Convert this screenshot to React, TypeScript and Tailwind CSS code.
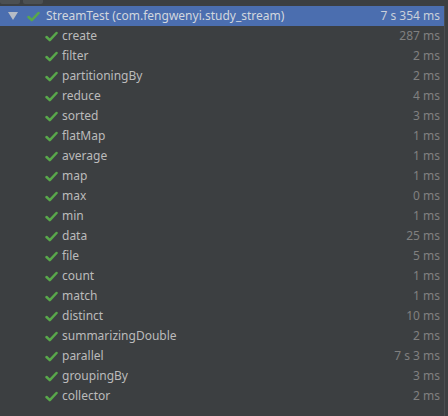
import React from "react";

const rows: [string, string][] = [
  ["create", "287 ms"],
  ["filter", "2 ms"],
  ["partitioningBy", "2 ms"],
  ["reduce", "4 ms"],
  ["sorted", "3 ms"],
  ["flatMap", "1 ms"],
  ["average", "1 ms"],
  ["map", "1 ms"],
  ["max", "0 ms"],
  ["min", "1 ms"],
  ["data", "25 ms"],
  ["file", "5 ms"],
  ["count", "1 ms"],
  ["match", "1 ms"],
  ["distinct", "10 ms"],
  ["summarizingDouble", "2 ms"],
  ["parallel", "7 s 3 ms"],
  ["groupingBy", "3 ms"],
  ["collector", "2 ms"],
];

function Check() {
  return (
    <svg width="13" height="11" viewBox="0 0 13 11" className="shrink-0">
      <path d="M1.5 6 L4.8 9.2 L11.5 2" fill="none" stroke="#59a84b" strokeWidth="2.5" strokeLinecap="round" strokeLinejoin="round" />
    </svg>
  );
}

export default function App() {
  return (
    <div
      className="w-[448px] h-[416px] bg-[#3c3f41] overflow-hidden flex flex-col text-[12px] text-[#bbbbbb]"
      style={{ fontFamily: '"Noto Sans", "DejaVu Sans", sans-serif' }}
    >
      <div className="h-[6px] flex gap-[3px] shrink-0">
        <div className="w-[20px] h-[4px] bg-[#4c5052] rounded-b-[2px]" />
        <div className="w-[20px] h-[4px] bg-[#4c5052] rounded-b-[2px]" />
      </div>
      <div className="flex flex-1">
        <div className="flex-1 flex flex-col">
          <div className="h-[20px] bg-[#4b6eaf] flex items-center">
            <svg width="10" height="8" viewBox="0 0 10 8" className="ml-[8px]">
              <path d="M0 0 L10 0 L5 8 Z" fill="#b6bcc6" />
            </svg>
            <div className="ml-[9px]">
              <Check />
            </div>
            <span className="ml-[6px] text-[#d2d7de] leading-none">StreamTest (com.fengwenyi.study_stream)</span>
            <span className="ml-auto mr-[4px] text-[#c9d0da] leading-none">7 s 354 ms</span>
          </div>
          {rows.map(([name, t]) => (
            <div key={name} className="h-[20px] flex items-center">
              <div className="ml-[45px]">
                <Check />
              </div>
              <span className="ml-[4px] leading-none">{name}</span>
              <span className="ml-auto mr-[4px] text-[#808080] leading-none">{t}</span>
            </div>
          ))}
        </div>
        <div className="w-[4px] border-l border-[#4a4d50] bg-[#3c3f41]" />
      </div>
    </div>
  );
}
